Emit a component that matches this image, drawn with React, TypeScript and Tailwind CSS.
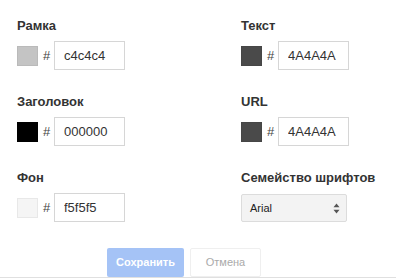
import React from "react";

type ColorField = {
  label: string;
  value: string;
  swatch: string;
};

const leftFields: ColorField[] = [
  { label: "Рамка", value: "c4c4c4", swatch: "#c4c4c4" },
  { label: "Заголовок", value: "000000", swatch: "#000000" },
  { label: "Фон", value: "f5f5f5", swatch: "#f5f5f5" },
];

const rightFields: ColorField[] = [
  { label: "Текст", value: "4A4A4A", swatch: "#4a4a4a" },
  { label: "URL", value: "4A4A4A", swatch: "#4a4a4a" },
];

function FieldLabel({ children }: { children: React.ReactNode }) {
  return (
    <div className="h-[15px] text-[13px] leading-[15px] font-bold text-[#333]">
      {children}
    </div>
  );
}

function ColorRow({ field }: { field: ColorField }) {
  return (
    <div className="flex flex-col gap-[8px]">
      <FieldLabel>{field.label}</FieldLabel>
      <div className="flex h-[29px] items-center">
        <div
          className="h-[20px] w-[21px] border border-black/5"
          style={{ backgroundColor: field.swatch }}
        />
        <span className="ml-[5px] w-[11px] text-[13px] text-[#444]">#</span>
        <input
          readOnly
          value={field.value}
          className="h-[29px] w-[71px] border border-[#d6d6d6] bg-white pl-[9px] text-[13px] text-[#333] outline-none"
        />
      </div>
    </div>
  );
}

function FontSelect() {
  return (
    <div className="flex flex-col gap-[8px]">
      <FieldLabel>Семейство шрифтов</FieldLabel>
      <div className="flex h-[29px] items-start pt-[1px]">
        <div className="flex h-[28px] w-[106px] items-center justify-between rounded-[2px] border border-[#dcdcdc] bg-[#f3f3f3] pl-[8px] pr-[6px]">
          <span className="text-[11px] text-[#222]">Arial</span>
          <svg width="7" height="11" viewBox="0 0 7 11">
            <path d="M3.5 0.5 L6.5 4.2 L0.5 4.2 Z" fill="#555" />
            <path d="M3.5 10.5 L6.5 6.8 L0.5 6.8 Z" fill="#555" />
          </svg>
        </div>
      </div>
    </div>
  );
}

export default function App() {
  return (
    <main
      className="h-[279px] w-[396px] overflow-hidden bg-white"
      style={{ fontFamily: '"Liberation Sans", Arial, sans-serif' }}
    >
      <div className="grid grid-cols-[224px_1fr] pl-[17px] pt-[18px]">
        <div className="flex flex-col gap-[24px]">
          {leftFields.map((f) => (
            <ColorRow key={f.label} field={f} />
          ))}
        </div>
        <div className="flex flex-col gap-[24px]">
          {rightFields.map((f) => (
            <ColorRow key={f.label} field={f} />
          ))}
          <FontSelect />
        </div>
      </div>

      <div className="mt-[26px] flex gap-[6px] border-b border-[#e0e0e0] pl-[107px]">
        <button className="h-[29px] w-[77px] rounded-[2px] bg-[#a5c3f6] text-[11px] font-bold text-white">
          Сохранить
        </button>
        <button className="h-[29px] w-[71px] rounded-[2px] border border-[#efefef] bg-white text-[11px] text-[#aaa]">
          Отмена
        </button>
      </div>
    </main>
  );
}
